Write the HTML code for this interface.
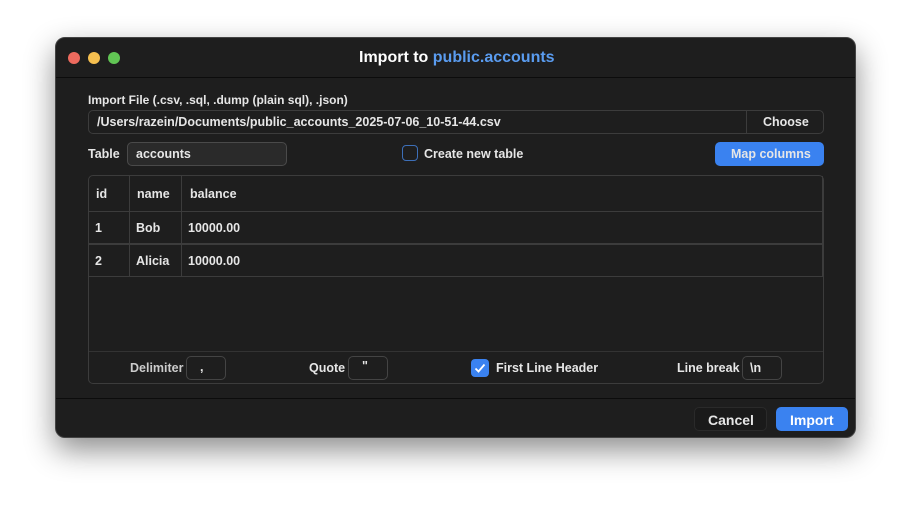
<!DOCTYPE html><html><head><style>
body{margin:0;width:912px;height:512px;background:#fff;font-family:"Liberation Sans",sans-serif;position:relative;overflow:hidden;color:#e6e6e6}
.a{position:absolute}
.win{left:55px;top:37px;width:801px;height:401px;background:#1e1e1e;border-radius:10px;box-shadow:0 12px 30px rgba(0,0,0,.45);border:1px solid #444;box-sizing:border-box}
.t{font-size:12.5px;font-weight:bold;white-space:nowrap}
.box{border:1px solid #3c3c3c;border-radius:5px;box-sizing:border-box}
.v{background:#3c3c3c}.h{background:#3c3c3c;height:1px}
</style></head><body>
<div class="a win"></div>
<div class="a" style="left:68px;top:52px;width:12px;height:12px;border-radius:50%;background:#ed6a5e"></div>
<div class="a" style="left:88px;top:52px;width:12px;height:12px;border-radius:50%;background:#f5bf4f"></div>
<div class="a" style="left:108px;top:52px;width:12px;height:12px;border-radius:50%;background:#61c554"></div>
<div class="a t" style="left:359px;top:49px;font-size:16px;color:#fff">Import to <span style="color:#5a9cf0">public.accounts</span></div>
<div class="a h" style="left:56px;top:77px;width:799px;background:#0c0c0c"></div>
<div class="a t" style="left:88px;top:93px;font-size:12px">Import File (.csv, .sql, .dump (plain sql), .json)</div>
<div class="a box" style="left:88px;top:110px;width:736px;height:24px"></div>
<div class="a v" style="left:746px;top:111px;width:1px;height:22px"></div>
<div class="a t" style="left:97px;top:115px">/Users/razein/Documents/public_accounts_2025-07-06_10-51-44.csv</div>
<div class="a t" style="left:763px;top:115px">Choose</div>
<div class="a t" style="left:88px;top:147px">Table</div>
<div class="a box" style="left:127px;top:142px;width:160px;height:24px;background:#2a2a2a;border-color:#4a4a4a"></div>
<div class="a t" style="left:136px;top:147px">accounts</div>
<div class="a" style="left:402px;top:145px;width:16px;height:16px;border:1.5px solid #3d6fb8;border-radius:4px;box-sizing:border-box"></div>
<div class="a t" style="left:424px;top:147px">Create new table</div>
<div class="a" style="left:715px;top:142px;width:109px;height:24px;background:#3a82f0;border-radius:5px"></div>
<div class="a t" style="left:731px;top:147px">Map columns</div>
<div class="a box" style="left:88px;top:175px;width:736px;height:209px"></div>
<div class="a h" style="left:89px;top:211px;width:734px"></div>
<div class="a h" style="left:89px;top:243px;width:734px;height:2px"></div>
<div class="a h" style="left:89px;top:276px;width:734px"></div>
<div class="a h" style="left:89px;top:351px;width:734px;background:#333"></div>
<div class="a v" style="left:129px;top:176px;width:1px;height:100px"></div>
<div class="a v" style="left:181px;top:176px;width:1px;height:100px"></div>
<div class="a v" style="left:822px;top:176px;width:1px;height:100px"></div>
<div class="a t" style="left:96px;top:187px">id</div>
<div class="a t" style="left:137px;top:187px">name</div>
<div class="a t" style="left:190px;top:187px">balance</div>
<div class="a t" style="left:95px;top:221px">1</div>
<div class="a t" style="left:136px;top:221px">Bob</div>
<div class="a t" style="left:188px;top:221px">10000.00</div>
<div class="a t" style="left:95px;top:254px">2</div>
<div class="a t" style="left:136px;top:254px">Alicia</div>
<div class="a t" style="left:188px;top:254px">10000.00</div>
<div class="a t" style="left:130px;top:361px;color:#ccc">Delimiter</div>
<div class="a box" style="left:186px;top:356px;width:40px;height:24px;border-color:#444"></div>
<div class="a t" style="left:200px;top:360px">,</div>
<div class="a t" style="left:309px;top:361px">Quote</div>
<div class="a box" style="left:348px;top:356px;width:40px;height:24px;border-color:#444"></div>
<div class="a t" style="left:362px;top:359px">"</div>
<div class="a" style="left:471px;top:359px;width:18px;height:18px;background:#3a82f0;border-radius:4px"><svg width="18" height="18"><path d="M4.5 9.5l3 3 6-7" stroke="#fff" stroke-width="1.8" fill="none"/></svg></div>
<div class="a t" style="left:496px;top:361px">First Line Header</div>
<div class="a t" style="left:677px;top:361px">Line break</div>
<div class="a box" style="left:742px;top:356px;width:40px;height:24px;border-color:#444"></div>
<div class="a t" style="left:750px;top:361px">\n</div>
<div class="a h" style="left:56px;top:398px;width:799px;background:#0c0c0c"></div>
<div class="a box" style="left:694px;top:407px;width:73px;height:24px;border-color:#2a2a2a;background:#1a1a1a"></div>
<div class="a t" style="left:708px;top:412px;font-size:14px">Cancel</div>
<div class="a" style="left:776px;top:407px;width:72px;height:24px;background:#3a82f0;border-radius:5px"></div>
<div class="a t" style="left:790px;top:412px;font-size:14px;color:#fff">Import</div>
</body></html>
